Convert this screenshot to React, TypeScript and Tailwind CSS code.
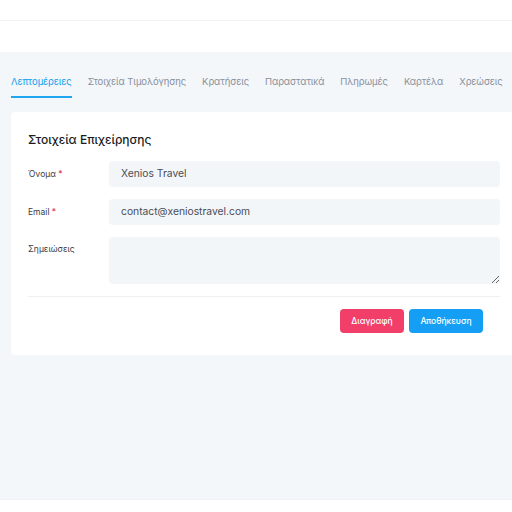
import React from 'react';

const tabs = ['Λεπτομέρειες', 'Στοιχεία Τιμολόγησης', 'Κρατήσεις', 'Παραστατικά', 'Πληρωμές', 'Καρτέλα', 'Χρεώσεις'];

export default function App() {
  return (
    <div className="w-[512px] h-[512px] overflow-hidden bg-white font-['Inter',sans-serif]">
      {/* Header */}
      <div className="h-[21px] border-b border-[#f1f3f5] bg-white"></div>
      <div className="h-[31px] bg-white"></div>

      {/* Content */}
      <div className="h-[448px] bg-[#f4f7fa] border-b border-[#eef1f5] pt-[22px]">
        {/* Tabs */}
        <div className="flex gap-[16px] pl-[11px] whitespace-nowrap">
          {tabs.map((tab, i) => (
            <div
              key={tab}
              className={`pb-[6px] text-[9.5px] tracking-[-0.1px] leading-[16px] border-b-2 ${
                i === 0 ? 'text-[#12a0ee] border-[#1ea7f0]' : 'text-[#8a8f9c] border-transparent'
              }`}
            >
              {tab}
            </div>
          ))}
        </div>

        {/* Card */}
        <div className="mt-[14px] ml-[11px] w-[506px] rounded-[4px] bg-white px-[17px] pt-[20px] pb-[22px]">
          <h2 className="text-[12px] leading-[16px] font-medium text-[#1a1c22]">Στοιχεία Επιχείρησης</h2>

          <div className="mt-[13px] flex flex-col gap-[12px]">
            <div className="flex items-center">
              <label className="w-[81px] text-[8.5px] text-[#3a3d45]">
                Όνομα <span className="text-[#e8344f]">*</span>
              </label>
              <div className="flex-1 h-[26px] rounded-[4px] bg-[#f3f6f9] px-[12px] flex items-center text-[10.3px] text-[#4a4d55]">
                Xenios Travel
              </div>
            </div>
            <div className="flex items-center">
              <label className="w-[81px] text-[8.5px] text-[#3a3d45]">
                Email <span className="text-[#e8344f]">*</span>
              </label>
              <div className="flex-1 h-[26px] rounded-[4px] bg-[#f3f6f9] px-[12px] flex items-center text-[10.3px] text-[#4a4d55]">
                contact@xeniostravel.com
              </div>
            </div>
            <div className="flex items-start">
              <label className="w-[81px] pt-[6px] text-[8.5px] text-[#3a3d45]">Σημειώσεις</label>
              <textarea className="flex-1 h-[47px] rounded-[4px] bg-[#f3f6f9] outline-none"></textarea>
            </div>
          </div>

          <div className="mt-[12px] border-t border-[#eef0f3]"></div>

          <div className="mt-[12px] flex justify-end gap-[5px] pr-[17px]">
            <button className="h-[24px] w-[64px] rounded-[4px] bg-[#f23f6a] text-[8.5px] font-medium text-white">Διαγραφή</button>
            <button className="h-[24px] w-[74px] rounded-[4px] bg-[#149ff4] text-[8.5px] font-medium text-white">Αποθήκευση</button>
          </div>
        </div>
      </div>
    </div>
  );
}
